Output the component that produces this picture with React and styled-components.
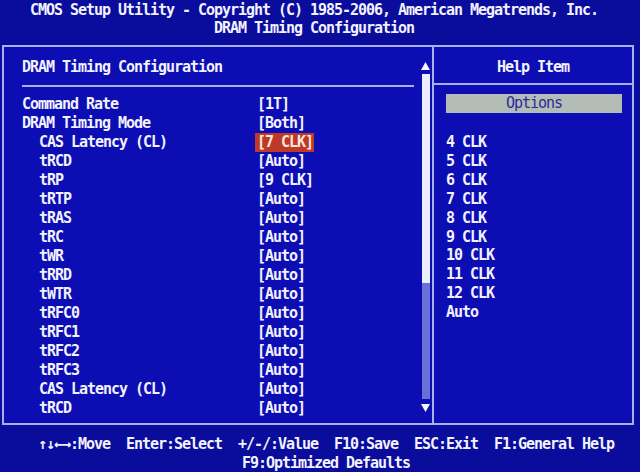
import React from 'react';
import styled, { createGlobalStyle, css } from 'styled-components';

const Global = createGlobalStyle`
  html, body {
    margin: 0;
    padding: 0;
    background: #0a0c9c;
  }
  * { box-sizing: border-box; }
`;

const biosFont = css`
  font-family: "DejaVu Sans Mono", "Liberation Mono", monospace;
  font-weight: bold;
  font-size: 15px;
  letter-spacing: -1.03px;
  white-space: pre;
`;

const Screen = styled.div`
  ${biosFont};
  width: 640px;
  height: 472px;
  overflow: hidden;
  background: #0a0c9c;
  color: #f2f2ff;
  display: flex;
  flex-direction: column;
`;

const Header = styled.header`
  display: flex;
  flex-direction: column;
  align-items: center;
  padding: 1px 12px 8px 0;
  line-height: 18px;
  height: 45px;
  flex: none;
`;

const Frame = styled.main`
  margin-left: 2px;
  width: 632px;
  height: 380px;
  flex: none;
  border: 2px solid #a9b0f0;
  background: #0c0eb4;
  display: grid;
  grid-template-columns: 428px 2px 1fr;
`;

const Divider = styled.div`
  background: #a9b0f0;
`;

const LeftPanel = styled.section`
  display: grid;
  grid-template-columns: 392px 9px;
  column-gap: 7px;
  padding-left: 18px;
  padding-right: 2px;
`;

const Content = styled.div`
  display: flex;
  flex-direction: column;
  padding-top: 11px;
`;

const PanelTitle = styled.div`
  line-height: 19px;
  text-align: ${(p) => (p.$center ? 'center' : 'left')};
`;

const Rule = styled.div`
  height: 2px;
  background: #a9b0f0;
  margin-top: ${(p) => p.$top}px;
`;

const Rows = styled.div`
  margin-top: 8px;
  display: flex;
  flex-direction: column;
`;

const Row = styled.div`
  display: grid;
  grid-template-columns: 233px auto;
  line-height: 19px;
  height: 19px;
`;

const Label = styled.span`
  padding-left: ${(p) => (p.$indent ? 17 : 0)}px;
`;

const Value = styled.span`
  justify-self: start;
  padding: 0 1px 0 2px;
  ${(p) =>
    p.$active &&
    css`
      background: #bd3a26;
      color: #ffe6de;
    `}
`;

const ScrollBar = styled.div`
  display: flex;
  flex-direction: column;
  align-items: center;
  margin-top: 15px;
  margin-bottom: 11px;
`;

const Arrow = styled.svg`
  width: 9px;
  height: 8px;
  flex: none;
  margin-top: ${(p) => p.$gap || 0}px;
  margin-bottom: ${(p) => p.$after || 0}px;
`;

const Thumb = styled.div`
  width: 8px;
  height: 209px;
  flex: none;
  background: #eaeeff;
`;

const Track = styled.div`
  width: 8px;
  flex: 1;
  background: #6870d6;
`;

const RightPanel = styled.aside`
  display: flex;
  flex-direction: column;
  padding-top: 11px;
`;

const HelpBody = styled.div`
  padding: 9px 10px 0 12px;
  display: flex;
  flex-direction: column;
`;

const OptionsBox = styled.div`
  height: 19px;
  line-height: 19px;
  text-align: center;
  background: #b4bcb6;
  color: #2a2c9c;
  font-weight: normal;
`;

const OptionList = styled.ul`
  list-style: none;
  margin: 20px 0 0;
  padding: 0;
`;

const OptionItem = styled.li`
  line-height: 18.9px;
`;

const Footer = styled.footer`
  display: flex;
  flex-direction: column;
  align-items: center;
  padding: 10px 0 0 12px;
  line-height: 19px;
`;

const rows = [
  { label: 'Command Rate', value: '[1T]' },
  { label: 'DRAM Timing Mode', value: '[Both]' },
  { label: 'CAS Latency (CL)', value: '[7 CLK]', indent: true, active: true },
  { label: 'tRCD', value: '[Auto]', indent: true },
  { label: 'tRP', value: '[9 CLK]', indent: true },
  { label: 'tRTP', value: '[Auto]', indent: true },
  { label: 'tRAS', value: '[Auto]', indent: true },
  { label: 'tRC', value: '[Auto]', indent: true },
  { label: 'tWR', value: '[Auto]', indent: true },
  { label: 'tRRD', value: '[Auto]', indent: true },
  { label: 'tWTR', value: '[Auto]', indent: true },
  { label: 'tRFC0', value: '[Auto]', indent: true },
  { label: 'tRFC1', value: '[Auto]', indent: true },
  { label: 'tRFC2', value: '[Auto]', indent: true },
  { label: 'tRFC3', value: '[Auto]', indent: true },
  { label: 'CAS Latency (CL)', value: '[Auto]', indent: true },
  { label: 'tRCD', value: '[Auto]', indent: true },
];

const options = ['4 CLK', '5 CLK', '6 CLK', '7 CLK', '8 CLK', '9 CLK', '10 CLK', '11 CLK', '12 CLK', 'Auto'];

export default function App() {
  return (
    <>
      <Global />
      <Screen>
        <Header>
          <span>CMOS Setup Utility - Copyright (C) 1985-2006, American Megatrends, Inc.</span>
          <span>DRAM Timing Configuration</span>
        </Header>
        <Frame>
          <LeftPanel>
            <Content>
              <PanelTitle>DRAM Timing Configuration</PanelTitle>
              <Rule $top={8} />
              <Rows>
                {rows.map((r, i) => (
                  <Row key={i}>
                    <Label $indent={r.indent}>{r.label}</Label>
                    <Value $active={r.active}>{r.value}</Value>
                  </Row>
                ))}
              </Rows>
            </Content>
            <ScrollBar>
              <Arrow viewBox="0 0 9 8" $after={4}>
                <polygon points="4.5,0 9,8 0,8" fill="#f4f6ff" />
              </Arrow>
              <Thumb />
              <Track />
              <Arrow viewBox="0 0 9 8" $gap={5}>
                <polygon points="0,0 9,0 4.5,8" fill="#f4f6ff" />
              </Arrow>
            </ScrollBar>
          </LeftPanel>
          <Divider />
          <RightPanel>
            <PanelTitle $center>Help Item</PanelTitle>
            <Rule $top={6} />
            <HelpBody>
              <OptionsBox>Options</OptionsBox>
              <OptionList>
                {options.map((o) => (
                  <OptionItem key={o}>{o}</OptionItem>
                ))}
              </OptionList>
            </HelpBody>
          </RightPanel>
        </Frame>
        <Footer>
          <span>↑↓←→:Move  Enter:Select  +/-/:Value  F10:Save  ESC:Exit  F1:General Help</span>
          <span>F9:Optimized Defaults</span>
        </Footer>
      </Screen>
    </>
  );
}
